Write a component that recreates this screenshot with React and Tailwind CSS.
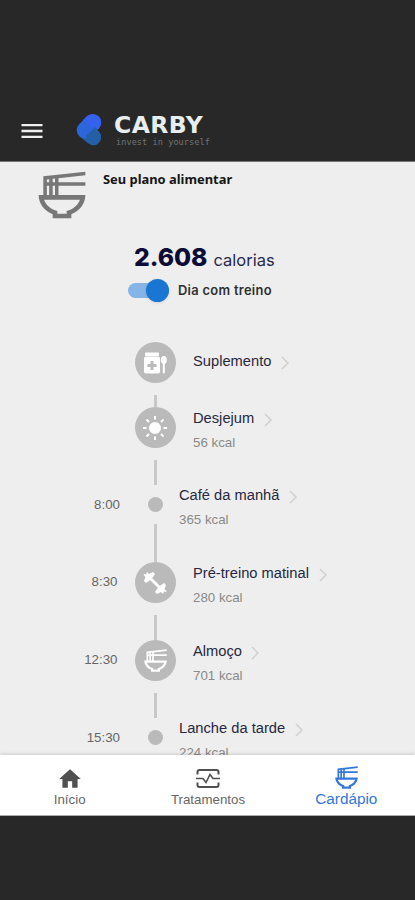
import React from "react";
import { MdOutlineRamenDining, MdHome, MdMenu } from "react-icons/md";

function Logo() {
  return (
    <svg width="26" height="32" viewBox="0 0 26 32" className="shrink-0" strokeLinecap="round">
      <path d="M9 16.500 17 23" stroke="#245ea6" strokeWidth="16" />
      <path d="M9 16 17 8.500" stroke="#2d66d8" strokeWidth="16.500" />
      <path d="M6.500 6.500 11 2Q13 .4 16.500 .3c8 0 11 8 6.500 14l-3 2Z" fill="#3461ee" />
      <path d="m10 22 9-9 4 5a8 8 0 0 1-8 13Z" fill="#245ea6" />
    </svg>
  );
}

function SupplementIcon() {
  return (
    <svg width="24" height="24" viewBox="0 0 24 24" fill="white">
      <rect x="2" y="1.500" width="14" height="3.500" rx="1" />
      <rect x="1" y="5.500" width="16" height="17" rx="2" />
      <path d="M7.500 10h3v3h3v3h-3v3h-3v-3h-3v-3h3Z" fill="#bababa" />
      <ellipse cx="20.800" cy="9" rx="3" ry="4" />
      <rect x="19.800" y="12" width="2" height="10.500" rx="1" />
    </svg>
  );
}

function SunIcon() {
  return (
    <svg width="26" height="26" viewBox="0 0 26 26" stroke="white" strokeWidth="2">
      <circle cx="13" cy="13" r="5" fill="white" />
      <path d="M13 1v3.500M13 21.500V25M1 13h3.500M21.500 13H25M4.500 4.500 7 7M19 19l2.500 2.500M4.500 21.500 7 19M19 7l2.500-2.500" />
    </svg>
  );
}

function DumbbellIcon() {
  return (
    <svg width="24" height="24" viewBox="0 0 24 24" fill="white">
      <path d="m5 7 2-2 12 12-2 2Z" />
      <path d="m1 3 2 .5L4 1l2 2 4-2 2 2-2 3-4 4-3 2-2-2 1.500-4L.5 4Z" />
      <path d="m23 21-2-.5-1 2.500-2-2-4 2-2-2 2-3 4-4 3-2 2 2-1.500 4L23.500 20Z" />
    </svg>
  );
}

function PulseIcon() {
  return (
    <svg width="24" height="19" viewBox="0 0 24 19" fill="none" stroke="#505050" strokeWidth="2">
      <path d="M1.500 5.500V3q0-2 2-2h17q2 0 2 2v2.500M1.500 13.500V16q0 2 2 2h17q2 0 2-2v-2.500" />
      <path d="M0 9.500h7l3 4 4-8 3 4h7" strokeWidth="1.600" />
    </svg>
  );
}

function Chevron() {
  return (
    <svg width="8" height="14" viewBox="0 0 8 14" fill="none" stroke="#d0d0d0" strokeWidth="1.500" className="mt-[3px] shrink-0">
      <path d="m1 1 6 6-6 6" />
    </svg>
  );
}

const meals = [
  { name: "Suplemento", icon: <SupplementIcon />, gap: "h-[65px]", line: "h-[12px]", width: "w-[79px]" },
  { name: "Desjejum", kcal: "56 kcal", icon: <SunIcon />, gap: "h-[78px]", line: "h-[25px]", width: "w-[62px]" },
  { name: "Café da manhã", kcal: "365 kcal", time: "8:00", gap: "h-[77px]", line: "h-[38px]", width: "w-[101px]" },
  { name: "Pré-treino matinal", kcal: "280 kcal", time: "8:30", icon: <DumbbellIcon />, gap: "h-[78px]", line: "h-[25px]", width: "w-[117px]" },
  { name: "Almoço", kcal: "701 kcal", time: "12:30", icon: <MdOutlineRamenDining size={27} color="white" />, gap: "h-[78px]", line: "h-[25px]", width: "w-[49px]" },
  { name: "Lanche da tarde", kcal: "224 kcal", time: "15:30", gap: "h-[77px]", line: "h-[38px]", width: "w-[107px]" },
];

function Meal({ meal }) {
  const big = Boolean(meal.icon);
  return (
    <div className={`flex shrink-0 ${meal.gap}`}>
      <div className={`w-[134.500px] shrink-0 pt-[11px] text-right text-[13.300px] leading-[18px] text-[#666] ${big ? "pr-[17px]" : "pr-[14.500px]"}`}>{meal.time}</div>
      <div className={`flex w-[41px] shrink-0 flex-col items-center ${big ? "" : "pt-[12px]"}`}>
        <div className={`flex shrink-0 items-center justify-center rounded-full bg-[#bababa] ${big ? "size-[41px]" : "size-[15px]"}`}>{meal.icon}</div>
        <div className={`mt-[12px] w-[3px] bg-[#c8c8c8] ${meal.line}`} />
      </div>
      <div className={`${big ? "pl-[17.500px]" : "pl-[3.500px]"} ${meal.kcal ? (big ? "pt-[1px]" : "pt-0") : "pt-[9px]"}`}>
        <div className="flex items-center gap-[9px]">
          <span className={`whitespace-nowrap text-[14.700px] leading-[20px] text-[#28283f] ${meal.width}`}>{meal.name}</span>
          <Chevron />
        </div>
        {meal.kcal && <div className="mt-[6px] text-[13.300px] leading-[18px] text-[#8a8a8a]">{meal.kcal}</div>}
      </div>
    </div>
  );
}

export default function App() {
  return (
    <div className="flex h-[900px] w-[415px] flex-col overflow-hidden bg-[#282828] font-['Liberation_Sans',sans-serif]">
      <header className="flex h-[162px] shrink-0 items-start border-b border-[#777] pt-[112px]">
        <MdMenu size={28} color="#efefef" className="ml-[18px] mt-[5px]" />
        <div className="ml-[30px] mt-[2px]"><Logo /></div>
        <div className="ml-[11px] pt-[1px]">
          <div className="pl-[1px] font-['DejaVu_Sans',sans-serif] text-[23.500px] font-bold leading-[25px] tracking-[0.4px] text-[#e8eef0]">CARBY</div>
          <div className="mt-[-1px] pl-[3px] font-['DejaVu_Sans_Mono',monospace] text-[8.500px] leading-[11px] tracking-[0.1px] text-[#737373]">invest in yourself</div>
        </div>
      </header>
      <main className="flex h-[593px] shrink-0 flex-col overflow-hidden bg-[#eeeeee]">
        <div className="flex h-[80px] shrink-0">
          <MdOutlineRamenDining size={56} color="#777777" className="ml-[34px] mt-[5px]" />
          <h1 className="ml-[13px] mt-[8px] font-['Noto_Sans',sans-serif] text-[12.900px] font-bold leading-[18px] text-[#151515]">Seu plano alimentar</h1>
        </div>
        <div className="flex h-[34px] shrink-0 items-baseline pl-[134px] font-['Inter',sans-serif] leading-[30px]">
          <span className="text-[24.700px] font-extrabold text-[#0c0c38]">2.608</span>
          <span className="ml-[6px] text-[16.500px] text-[#29294a]">calorias</span>
        </div>
        <div className="flex h-[28px] shrink-0 items-center pl-[128px] pt-[1px]">
          <div className="flex h-[15px] w-[41px] items-center justify-end rounded-full bg-[#87b4e6]">
            <div className="size-[23px] shrink-0 rounded-full bg-[#1976d2] shadow-sm" />
          </div>
          <span className="ml-[9px] font-['Inter',sans-serif] text-[12.900px] font-semibold tracking-[0.3px] text-[#303030]">Dia com treino</span>
        </div>
        <div className="mt-[38px] flex shrink-0 flex-col">
          {meals.map((meal) => <Meal key={meal.name} meal={meal} />)}
        </div>
      </main>
      <nav className="grid h-[61px] shrink-0 grid-cols-3 border-b border-[#aaa] bg-white text-[13.300px] text-[#666] shadow-[0_-1px_3px_rgba(0,0,0,0.15)]">
        <div className="flex flex-col items-center pl-[1px] pt-[11px]">
          <MdHome size={26} color="#505050" />
          <span className="leading-[15px]">Início</span>
        </div>
        <div className="flex flex-col items-center pl-[1px] pt-[14px]">
          <PulseIcon />
          <span className="mt-[4px] leading-[15px]">Tratamentos</span>
        </div>
        <div className="flex flex-col items-center pl-[1px] pt-[9px] text-[#3477dc]">
          <MdOutlineRamenDining size={27} />
          <span className="text-[15.300px] leading-[16px]">Cardápio</span>
        </div>
      </nav>
    </div>
  );
}
